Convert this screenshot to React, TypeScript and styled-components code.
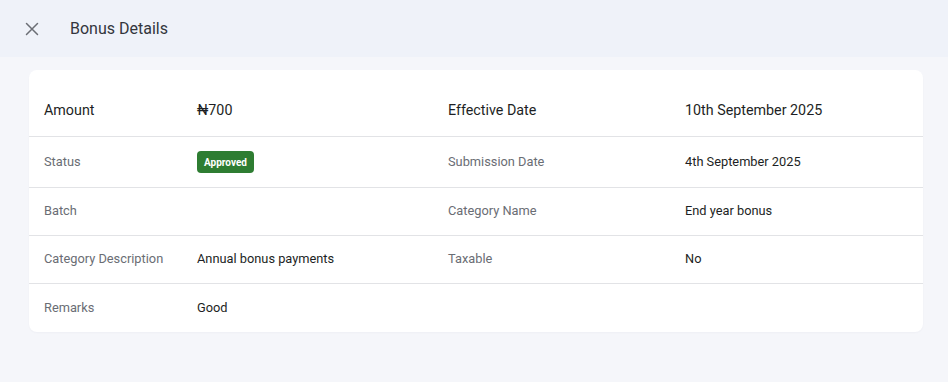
import React from 'react'
import styled, {createGlobalStyle} from 'styled-components'

const GlobalStyle = createGlobalStyle`
  html, body {
    margin: 0;
    padding: 0;
    background: #f5f6fa;
    font-family: Roboto, "Liberation Sans", Arial, sans-serif;
  }
`

interface IRow {
  label: string
  value?: React.ReactNode
  label2?: string
  value2?: React.ReactNode
}

const rows: IRow[] = [
  {label: 'Status', value: <Badge>Approved</Badge>, label2: 'Submission Date', value2: '4th September 2025'},
  {label: 'Batch', value: '', label2: 'Category Name', value2: 'End year bonus'},
  {label: 'Category Description', value: 'Annual bonus payments', label2: 'Taxable', value2: 'No'},
  {label: 'Remarks', value: 'Good'},
]

export default function App() {
  return (
    <Page>
      <GlobalStyle />
      <Header>
        <CloseButton aria-label="close">
          <svg width="14" height="14" viewBox="0 0 14 14">
            <path d="M1.5 1.5 L12.5 12.5 M12.5 1.5 L1.5 12.5" stroke="#6b6e75" strokeWidth="1.5" strokeLinecap="round" />
          </svg>
        </CloseButton>
        <Title>Bonus Details</Title>
      </Header>
      <Body>
        <Card>
          <Row head>
            <Label head>Amount</Label>
            <Value head>₦700</Value>
            <Label head>Effective Date</Label>
            <Value head>10th September 2025</Value>
          </Row>
          {rows.map((r) => (
            <Row key={r.label}>
              <Label>{r.label}</Label>
              <Value>{r.value}</Value>
              <Label>{r.label2}</Label>
              <Value>{r.value2}</Value>
            </Row>
          ))}
        </Card>
      </Body>
    </Page>
  )
}

const Page = styled.div`
  min-height: 382px;
  background: #f5f6fa;
`

const Header = styled.div`
  height: 57px;
  display: flex;
  align-items: center;
  background: #eff2f9;
  padding-left: 24px;
  box-sizing: border-box;
`

const CloseButton = styled.button`
  width: 16px;
  height: 16px;
  display: flex;
  align-items: center;
  justify-content: center;
  border: 0;
  background: none;
  padding: 0;
  margin-right: 30px;
  cursor: pointer;
`

const Title = styled.h1`
  margin: 0;
  font-size: 16px;
  font-weight: 400;
  color: #33363d;
`

const Body = styled.div`
  padding: 13px 25px 0 29px;
`

const Card = styled.div`
  background: #fff;
  border-radius: 8px;
  padding-top: 14px;
  box-shadow: 0 1px 2px rgba(20, 30, 60, 0.03);
`

interface IHead {
  head?: boolean
}

const Row = styled.div<IHead>`
  display: grid;
  grid-template-columns: 153px 251px 237px 1fr;
  align-items: center;
  padding: 0 15px;
  min-height: ${p => p.head ? 53 : 48}px;
  box-sizing: border-box;
  border-bottom: 1px solid #e2e3e6;
  &:last-child {
    border-bottom: 0;
  }
`

const Label = styled.div<IHead>`
  font-size: ${p => p.head ? 14.3 : 12.8}px;
  line-height: 19px;
  color: ${p => p.head ? '#1d1f24' : '#6a6d74'};
  padding: ${p => p.head ? '14px 0' : '13px 0 15px'};
`

const Value = styled.div<IHead>`
  font-size: ${p => p.head ? 14.3 : 12.8}px;
  line-height: 19px;
  color: #1d1f24;
  padding: ${p => p.head ? '14px 0' : '13px 0 15px'};
  display: flex;
  align-items: center;
`

function Badge(props: {children: React.ReactNode}) {
  return <BadgeBox>{props.children}</BadgeBox>
}

const BadgeBox = styled.span`
  display: inline-flex;
  align-items: center;
  height: 22px;
  margin: 1px 0 -1px;
  padding: 0 7px;
  border-radius: 4px;
  background: #2e7d32;
  color: #fff;
  font-size: 10px;
  font-weight: 700;
`
